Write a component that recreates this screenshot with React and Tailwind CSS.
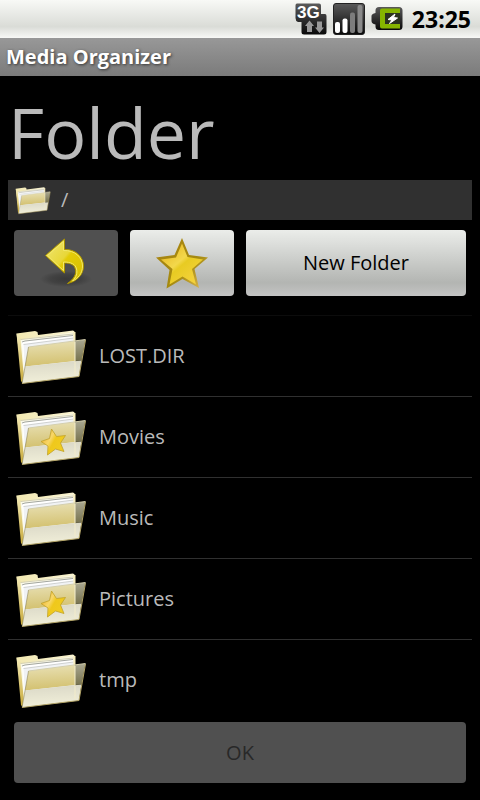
const folders = [
  { name: 'LOST.DIR', starred: false },
  { name: 'Movies', starred: true },
  { name: 'Music', starred: false },
  { name: 'Pictures', starred: true },
  { name: 'tmp', starred: false },
]

function Gradients() {
  return (
    <svg className="absolute w-0 h-0" aria-hidden="true">
      <defs>
        <linearGradient id="folder-back" x1="0" y1="0" x2="1" y2="0">
          <stop offset="0" stopColor="#f3e9b0" />
          <stop offset="0.4" stopColor="#f4ecc0" />
          <stop offset="1" stopColor="#f8f2cf" />
        </linearGradient>
        <linearGradient id="folder-spine" x1="0" y1="0" x2="0" y2="1">
          <stop offset="0" stopColor="#f4ebb8" />
          <stop offset="1" stopColor="#c9ab3a" />
        </linearGradient>
        <linearGradient id="folder-front" x1="0" y1="0" x2="0.1" y2="1">
          <stop offset="0" stopColor="#e9e1b6" />
          <stop offset="1" stopColor="#d3c170" />
        </linearGradient>
        <linearGradient id="folder-flap" x1="0" y1="0" x2="0" y2="1">
          <stop offset="0" stopColor="#aaa892" />
          <stop offset="1" stopColor="#77734f" />
        </linearGradient>
        <linearGradient id="folder-shine" x1="0" y1="0" x2="0.1" y2="1">
          <stop offset="0" stopColor="#d9d7c6" />
          <stop offset="1" stopColor="#f1efd9" />
        </linearGradient>
        <linearGradient id="star-fill" x1="0.1" y1="0.1" x2="0.8" y2="0.9">
          <stop offset="0" stopColor="#e8b822" />
          <stop offset="0.45" stopColor="#f3d84c" />
          <stop offset="0.55" stopColor="#e8cb22" />
          <stop offset="1" stopColor="#f4d23c" />
        </linearGradient>
        <linearGradient id="star-edge" x1="0" y1="0" x2="1" y2="1">
          <stop offset="0" stopColor="#a98412" />
          <stop offset="0.6" stopColor="#a58a10" />
          <stop offset="1" stopColor="#e2bd5c" />
        </linearGradient>
        <linearGradient id="small-star" x1="0" y1="0" x2="1" y2="0.6">
          <stop offset="0" stopColor="#eda51c" />
          <stop offset="0.45" stopColor="#f8d768" />
          <stop offset="0.6" stopColor="#efc81c" />
          <stop offset="1" stopColor="#f1cd20" />
        </linearGradient>
        <linearGradient id="arrow-fill" x1="0" y1="0" x2="1" y2="1">
          <stop offset="0" stopColor="#f0e778" />
          <stop offset="0.45" stopColor="#e8d738" />
          <stop offset="0.5" stopColor="#e3cc08" />
          <stop offset="1" stopColor="#d6bd00" />
        </linearGradient>
        <radialGradient id="arrow-shadow">
          <stop offset="0" stopColor="#383838" />
          <stop offset="0.6" stopColor="#424242" />
          <stop offset="1" stopColor="#505050" />
        </radialGradient>
        <linearGradient id="status-dark" x1="0" y1="0" x2="0" y2="1">
          <stop offset="0" stopColor="#5a5a5a" />
          <stop offset="0.5" stopColor="#303030" />
          <stop offset="1" stopColor="#080808" />
        </linearGradient>
      </defs>
    </svg>
  )
}

function FolderIcon({ className, starred }) {
  return (
    <svg className={className} viewBox="0 0 72 72" aria-hidden="true">
      {/* Back cover with tab */}
      <path d="M1.500 13.500 L20 11 L22.500 12 L23 15 L58 10.500 L59.500 11.500 L60 50 L8 62 Z" fill="url(#folder-back)" />
      <path d="M1.500 13.500 L5 17 L13 27 L7.500 63 L6 61 Z" fill="url(#folder-spine)" />
      {/* Sheets of paper */}
      <path d="M5.500 19.500 L58.500 12.500 L58.500 48 L9 58 Z" fill="#fbfae9" />
      <path d="M5.500 19.500 L58.500 14" stroke="#c9c5a8" strokeWidth="0.800" />
      <path d="M7 22 L58.500 15.500 L58.500 48 L10 56 Z" fill="#ffffff" />
      <path d="M7 22 L10 21 L58 15.500" fill="none" stroke="#8d908e" strokeWidth="0.800" />
      <path d="M8.500 24.500 L58.500 18 L58.500 48 L10 54 Z" fill="#f0f2f4" />
      <path d="M8.500 24.500 L58.500 18" stroke="#c4c7c5" strokeWidth="0.800" />
      <path d="M59.500 12 V21" stroke="#f5ebba" strokeWidth="2" />
      {/* Front cover */}
      <path d="M13.500 27 L60 21 L60 41 L10 46.500 Z" fill="url(#folder-front)" />
      <path d="M60 21 L70.500 19.500 L66.500 40.500 L60 41 Z" fill="url(#folder-flap)" />
      <path d="M10 46.500 L66.500 40.500 L64 56.500 L7 63.500 Z" fill="url(#folder-shine)" />
      <path d="M60 22 V55" stroke="#f3eccb" strokeWidth="1.500" opacity="0.700" />
      <path d="M13.500 27 L70.500 19.500" stroke="#d4cfad" strokeWidth="1" />
      <path d="M13.500 27 L7 63.500" stroke="#777043" strokeWidth="0.800" opacity="0.600" />
      <path d="M7 63.500 L64 56.500 L70.500 20" fill="none" stroke="#b4a568" strokeWidth="1" />
      {starred && (
        <path
          d="M36.500 28 L41.500 35.500 L50.500 34.500 L45.500 42 L49 50.500 L40.500 48 L32.500 54 L33 45 L26 40.500 L34.500 37.500 Z"
          fill="url(#small-star)"
          stroke="#c0a22a"
          strokeWidth="0.800"
        />
      )}
    </svg>
  )
}

function BackArrowIcon() {
  return (
    <svg className="w-14 h-14" viewBox="0 0 56 56" aria-hidden="true">
      <ellipse cx="28" cy="44" rx="26" ry="8" fill="url(#arrow-shadow)" />
      <path
        d="M7.500 20.500 L26.500 4 V14.500 C38 14 45.500 22 45.500 31 C45.500 40 38.500 46.500 29.500 48.500 C36 44 38.500 39 37.500 34.500 C36.500 30 33 28 26.500 28 V38 Z"
        fill="url(#arrow-fill)"
        stroke="#a99200"
        strokeWidth="1"
        strokeLinejoin="round"
      />
      <path
        d="M9.500 20.500 L25.500 6.500 V15.500 C37 15 44.500 22.500 44.500 31 C44.500 38.500 40 43.500 34.500 46 C38.500 42 39.500 38 38.500 34 C37.500 29 33 27 25.500 27 V35.500 Z"
        fill="none"
        stroke="#f3e86a"
        strokeWidth="1"
      />
    </svg>
  )
}

function StarIcon() {
  return (
    <svg className="w-14 h-14" viewBox="0 0 56 56" aria-hidden="true">
      <path
        d="M28 3 L35 20 L54 22.500 L40.500 34 L45 53 L28.500 44 L12.500 53.500 L15.500 35 L2 22.500 L20.500 20 Z"
        fill="url(#star-edge)"
      />
      <path
        d="M28 8.500 L33.500 22 L49 24.500 L38 34 L42 49.500 L28.500 41.500 L15.500 49.500 L18.500 34 L7 24.500 L22 22.500 Z"
        fill="url(#star-fill)"
      />
    </svg>
  )
}

function NetworkIcon() {
  return (
    <svg className="w-8 h-8" viewBox="0 0 32 32">
      <path d="M2 0.500 H24 Q26 0.500 26 2.500 V11 H30 Q31.500 11 31.500 13 V29 Q31.500 31.500 29 31.500 H9 Q6.500 31.500 6.500 29 V19 H3 Q0.500 18 0.500 15 V2.500 Q0.500 0.500 2 0.500 Z" fill="url(#status-dark)" />
      <text x="2" y="15" fill="#ffffff" className="font-['Liberation_Sans',sans-serif] text-[17px] font-bold">3G</text>
      <path d="M14.500 17.500 L19 23 H17 V29 H12 V23 H10 Z M24.500 30 L20 24.500 H22 V18.500 H27 V24.500 H29 Z" fill="#999999" />
    </svg>
  )
}

function SignalIcon() {
  return (
    <svg className="w-8 h-8" viewBox="0 0 32 32" aria-hidden="true">
      <rect x="0.500" y="0.500" width="31" height="31" rx="2.500" fill="url(#status-dark)" stroke="#222222" />
      <rect x="2" y="19" width="5" height="11" rx="2" fill="#ffffff" />
      <rect x="9.500" y="15.500" width="5" height="14.500" rx="2" fill="#ffffff" />
      <rect x="17" y="9.500" width="5" height="20.500" rx="2" fill="#7c7c7c" />
      <rect x="24.500" y="2" width="5" height="28" rx="2" fill="#8a8a8a" />
    </svg>
  )
}

function BatteryIcon() {
  return (
    <svg className="w-8 h-8" viewBox="0 0 32 32" aria-hidden="true">
      <path d="M8 4 H28 Q31.500 4 31.500 7.500 V23.500 Q31.500 27 28 27 H8 Q4.500 27 4.500 23.500 V21.500 Q0.500 20.500 0.500 18 V13 Q0.500 11 4.500 10 V7.500 Q4.500 4 8 4 Z" fill="url(#status-dark)" />
      <path d="M29 5.500 H11 Q9 5.500 9 7.500 V23.500 Q9 25.500 11 25.500 H29 V21 H14 V10 H29 Z" fill="#86b500" />
      <path d="M14 10 H29 V21 H14 Z" fill="#2c3320" />
      <path d="M24 11 L17 16.500 L21 17 L18.500 20.500 L26.500 15 L22.500 14.500 Z" fill="#ffffff" stroke="#ffffff" />
    </svg>
  )
}

function StatusBar() {
  return (
    <header className="h-[38px] px-[9px] flex items-center justify-end gap-[6px] bg-linear-to-b from-[#f8f9f6] via-[#dadcd7] via-70% to-[#f8f8f6]">
      <NetworkIcon />
      <SignalIcon />
      <BatteryIcon />
      <span className="pl-[3px] text-[23px] leading-[38px] font-bold text-black">23:25</span>
    </header>
  )
}

function FolderRow({ folder }) {
  return (
    <li className="border-b border-[#303030] last:border-b-0">
      <button className="w-full h-20 pl-[7px] flex items-center gap-3 text-left text-xl">
        <FolderIcon className="w-[72px] h-[72px]" starred={folder.starred} />
        <span>{folder.name}</span>
      </button>
    </li>
  )
}

export default function App() {
  return (
    <div className="min-h-screen flex flex-col bg-black text-[#bababa] font-['Open_Sans','Noto_Sans',sans-serif]">
      <Gradients />
      <StatusBar />
      <div className="h-[38px] px-[6px] flex items-center bg-linear-to-b from-[#989898] to-[#7b7b7b]">
        <span className="text-xl font-bold text-white text-shadow-[1px_1px_3px_#333333]">Media Organizer</span>
      </div>

      <main className="px-2 flex-1 flex flex-col">
        <h1 className="h-[104px] pt-2 text-[70px] leading-[96px]">Folder</h1>

        <div className="h-10 pl-[7px] flex items-center gap-[10px] bg-[#303030] text-xl">
          <FolderIcon className="w-9 h-9" />
          <span>/</span>
        </div>

        <div className="px-[6px] pt-[10px] flex gap-3">
          <button aria-label="Up" className="w-[104px] h-[66px] flex items-center justify-center rounded bg-[#505050]">
            <BackArrowIcon />
          </button>
          <button aria-label="Favorite" className="w-[104px] h-[66px] flex items-center justify-center rounded bg-linear-to-b from-[#ebedea] via-[#b3b5b2] via-80% to-[#c4c4c4]">
            <StarIcon />
          </button>
          <button className="flex-1 h-[66px] rounded bg-linear-to-b from-[#ebedea] via-[#b3b5b2] via-80% to-[#c4c4c4] text-xl text-black">
            New Folder
          </button>
        </div>

        <ul className="mt-[19px] border-t border-[#0c0c0c]">
          {folders.map((folder) => (
            <FolderRow key={folder.name} folder={folder} />
          ))}
        </ul>

        <div className="px-[6px] pt-[2px]">
          <button disabled className="w-full h-[61px] rounded bg-[#505050] text-xl text-[#282828]">
            OK
          </button>
        </div>
      </main>
    </div>
  )
}
